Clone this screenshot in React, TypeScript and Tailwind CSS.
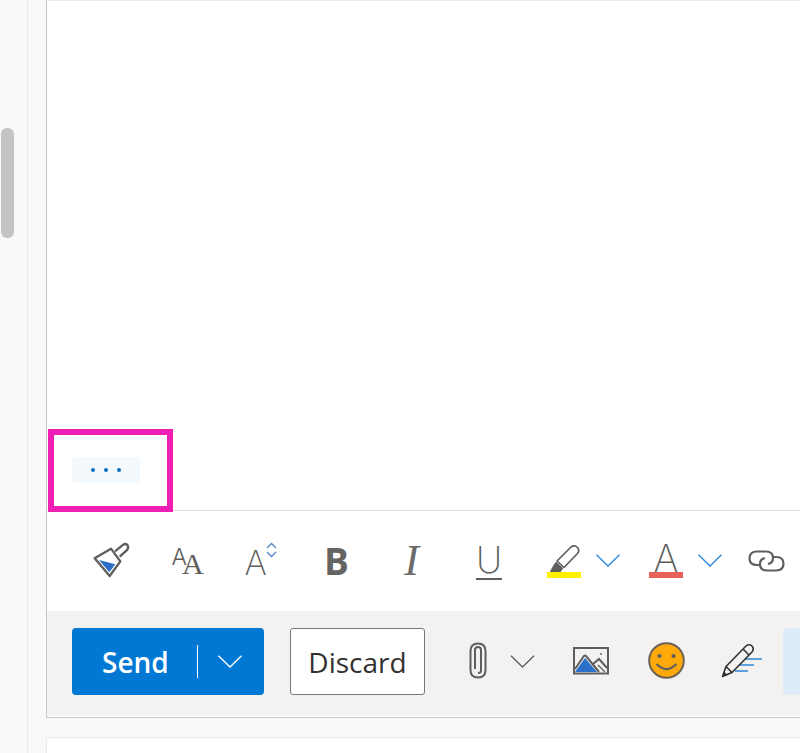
const font = "font-['Open_Sans','Noto_Sans',sans-serif]";

function Chevron({ color = "#2b88d8", width = 24 }: { color?: string; width?: number }) {
  return (
    <svg width={width} height={13} viewBox="0 0 24 13" fill="none" stroke={color} strokeWidth="1.3">
      <path d="M0.5 0.7 L12 12 L23.5 0.7" />
    </svg>
  );
}

function BrushIcon() {
  return (
    <svg width="37" height="37" viewBox="42 48 111 111" fill="none" stroke="#605e5c" strokeWidth="7" strokeLinejoin="round">
      <path d="M47 97 L96 68 L124 106 L92 150 Z" />
      <path d="M60 102 L109 115 L91 139 Z" fill="#2b6fc9" stroke="none" />
      <path d="M108 76 L130 58 Q138 51 145 57 Q151 65 143 73 L122 92" />
    </svg>
  );
}

function FontSizeIcon() {
  return (
    <div className="flex h-[34px] w-[32px] items-start pl-px text-[#605e5c]">
      <span className="mt-[-2px] font-['Inter',sans-serif] text-[23px] font-light leading-[30px] tracking-[-5px]">A</span>
      <span className="mt-[3px] font-['Liberation_Serif',serif] text-[30px] leading-[34px]">A</span>
    </div>
  );
}

function GrowIcon() {
  return (
    <div className="relative h-[36px] w-[32px] text-[#605e5c]">
      <span className="absolute left-[-1px] top-[1px] font-['Inter',sans-serif] text-[34px] font-extralight leading-[38px]">A</span>
      <svg className="absolute left-[20px] top-[-1px]" width="11" height="16" viewBox="0 0 11 16" fill="none" stroke="#4f86c6" strokeWidth="1.3">
        <path d="M1 6 L5.5 1.5 L10 6" />
        <path d="M1 10 L5.5 14.5 L10 10" />
      </svg>
    </div>
  );
}

function HighlightIcon() {
  return (
    <div className="flex w-[34px] flex-col items-center">
      <svg width="34" height="28" viewBox="0 0 34 28" fill="none" stroke="#605e5c" strokeWidth="1.700" strokeLinejoin="round">
        <path d="M10 17 L24 3 Q27.500 0.500 30.500 3.500 Q33 6.500 30.500 9.500 L17 23.500 L10 17 Z" />
        <path d="M7 22 L4 27.500 L13 27.500 L15 24.500 L9 19 Z" fill="#605e5c" />
      </svg>
      <div className="h-[6px] w-[34px] bg-[#fff100]" />
    </div>
  );
}

function FontColorIcon() {
  return (
    <div className="flex w-[34px] flex-col items-center">
      <span className="h-[28px] font-['Inter',sans-serif] text-[38px] font-extralight leading-[28px] text-[#605e5c]">A</span>
      <div className="h-[6px] w-[34px] bg-[#e8605a]" />
    </div>
  );
}

function LinkIcon() {
  return (
    <svg width="37" height="24" viewBox="0 0 37 24" fill="none" stroke="#605e5c" strokeWidth="2.200">
      <path d="M13 16 H9 Q1.500 16 1.500 9.500 Q1.500 2.500 9 2.500 H18 Q25 2.500 25 9 Q25 14 20 15" />
      <path d="M24 8 H28 Q35.500 8 35.500 14.500 Q35.500 21.500 28 21.500 H19 Q12 21.500 12 15 Q12 10 17 9" />
    </svg>
  );
}

function ClipIcon() {
  return (
    <svg width="18" height="37" viewBox="0 0 18 37" fill="none" stroke="#605e5c" strokeWidth="2">
      <path d="M6 27 V8 Q6 5 9 5 Q12 5 12 8 V29 Q12 31 9 31" />
      <path d="M9 35.500 Q1.500 35.500 1.500 28 V9 Q1.500 1.500 9 1.500 Q16.500 1.500 16.500 9 V28 Q16.500 35.500 9 35.500" />
    </svg>
  );
}

function PictureIcon() {
  return (
    <svg width="36" height="28" viewBox="0 0 36 28" fill="none">
      <rect x="1" y="1" width="34" height="25.500" stroke="#605e5c" strokeWidth="2" />
      <path d="M2 25 L12 11 L24 25 Z" fill="#2b6fc9" />
      <path d="M2 22 L11 9 Q12 8 13 9 L26 25" stroke="#605e5c" strokeWidth="2" />
      <path d="M20 17 L26 12 L34 21" stroke="#605e5c" strokeWidth="2" />
      <path d="M25 18 L32 25" stroke="#605e5c" strokeWidth="1.200" />
      <circle cx="28" cy="7" r="0.900" fill="#605e5c" />
    </svg>
  );
}

function EmojiIcon() {
  return (
    <svg width="37" height="37" viewBox="0 0 37 37" fill="none">
      <circle cx="18.500" cy="18.500" r="17.300" fill="#ffaa0a" stroke="#6b6255" strokeWidth="2" />
      <circle cx="11.500" cy="14" r="2.100" fill="#605e5c" />
      <circle cx="25.500" cy="14" r="2.100" fill="#605e5c" />
      <path d="M8.500 22 Q18.500 32 28.500 22" stroke="#605e5c" strokeWidth="2.200" />
    </svg>
  );
}

function SignatureIcon() {
  return (
    <svg width="42" height="35" viewBox="0 0 42 35" fill="none">
      <path d="M17 16 H41 M14 22 H33 M14 28 H27" stroke="#2b88d8" strokeWidth="1.500" />
      <path
        d="M1.500 33.500 L5 23.500 L25 3 Q28 0.500 31 3 Q33.500 6 31 9 L11 29.500 Z M5 23.500 L11 29.500 M22 6 L28 12"
        fill="#f3f2f1"
        stroke="#323130"
        strokeWidth="1.600"
        strokeLinejoin="round"
      />
      <path d="M1.500 33.500 L3 28.500 L6.500 32 Z" fill="#323130" />
    </svg>
  );
}

export default function App() {
  return (
    <div className={`flex h-[753px] w-[800px] overflow-hidden bg-[#faf9f8] ${font}`}>
      <aside className="h-full w-[28px] shrink-0 border-r border-[#edebe9] pl-[1px] pt-[128px]">
        <div className="h-[110px] w-[13px] rounded-[6px] bg-[#c4c4c4]" />
      </aside>

      <main className="flex h-full min-w-0 flex-1 flex-col pl-[18px]">
        <section className="relative flex h-[718px] w-[800px] shrink-0 flex-col border-b border-l border-t border-[#c8c6c4] border-t-[#edebe9] bg-white">
          <div className="flex h-[510px] shrink-0 items-end border-b border-[#e1dfdd] pb-[27px] pl-[25px]">
            <button className="flex h-[26px] w-[68px] items-center justify-center gap-[9px] rounded-[4px] bg-[#f3f9fd]">
              <span className="h-[4px] w-[4px] rounded-full bg-[#106ebe]" />
              <span className="h-[4px] w-[4px] rounded-full bg-[#106ebe]" />
              <span className="h-[4px] w-[4px] rounded-full bg-[#106ebe]" />
            </button>
          </div>

          {/* pink annotation drawn over the compose body */}
          <div className="absolute left-[1px] top-[428px] h-[83px] w-[125px] border-[6px] border-[#f01fb4]" />

          <div className="flex h-[100px] shrink-0 items-center pl-[27px] pb-[1px]">
            <div className="flex w-[75px] justify-center"><BrushIcon /></div>
            <div className="flex w-[75px] justify-center"><FontSizeIcon /></div>
            <div className="flex w-[75px] justify-center"><GrowIcon /></div>
            <div className="flex w-[75px] justify-center">
              <span className="font-['Open_Sans',sans-serif] text-[37px] font-bold leading-none text-[#666462]">B</span>
            </div>
            <div className="flex w-[75px] justify-center">
              <span className="font-['Liberation_Serif',serif] text-[44px] italic leading-none text-[#6e6c6a]">I</span>
            </div>
            <div className="flex w-[80px] justify-center">
              <span className="border-b-2 border-[#605e5c] font-['Inter',sans-serif] text-[36px] font-extralight leading-[36px] text-[#605e5c]">U</span>
            </div>
            <div className="flex w-[100px] items-center pl-[18px]">
              <HighlightIcon />
              <div className="ml-[15px]"><Chevron /></div>
            </div>
            <div className="flex w-[100px] items-center pl-[20px]">
              <FontColorIcon />
              <div className="ml-[15px]"><Chevron /></div>
            </div>
            <div className="ml-[19px] flex"><LinkIcon /></div>
          </div>

          <footer className="flex h-[105px] shrink-0 items-start bg-[#f3f2f1] pl-[25px] pt-[17px]">
            <button className="flex h-[67px] w-[192px] shrink-0 items-center rounded-[4px] bg-[#0078d4] pl-[30px] text-white">
              <span className="w-[66px] text-left text-[28px] font-semibold leading-none">Send</span>
              <span className="ml-[29px] h-[33px] w-[1px] bg-white" />
              <span className="ml-[19px]"><Chevron color="#ffffff" width={26} /></span>
            </button>
            <button className="ml-[26px] flex h-[67px] w-[135px] shrink-0 items-center justify-center rounded-[3px] border border-[#797775] bg-white text-[28px] font-medium leading-none text-[#323130]">
              Discard
            </button>
            <div className="ml-[44px] mt-[14px] flex shrink-0"><ClipIcon /></div>
            <div className="ml-[23px] mt-[27px] flex shrink-0"><Chevron color="#605e5c" width={25} /></div>
            <div className="ml-[38px] mt-[19px] flex shrink-0"><PictureIcon /></div>
            <div className="ml-[39px] mt-[14px] flex shrink-0"><EmojiIcon /></div>
            <div className="ml-[36px] mt-[15px] flex shrink-0"><SignatureIcon /></div>
            <div className="ml-[20px] h-[67px] w-[40px] shrink-0 rounded-l-[4px] bg-[#deecf9]" />
          </footer>
        </section>

        <div className="mt-[19px] h-[40px] w-[800px] shrink-0 rounded-[2px] border border-[#edebe9] bg-white" />
      </main>
    </div>
  );
}
